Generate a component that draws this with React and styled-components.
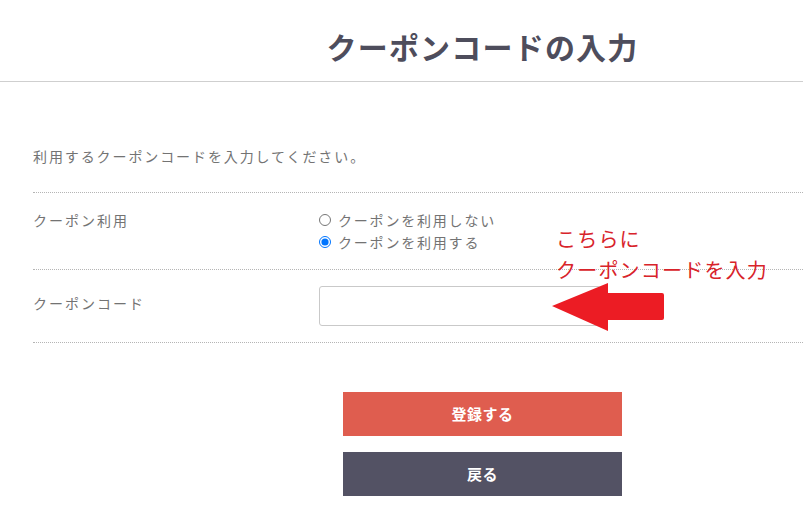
import React from "react";
import styled, { createGlobalStyle } from "styled-components";

const GlobalStyle = createGlobalStyle`
  html, body {
    margin: 0;
    padding: 0;
    background: #fff;
    overflow: hidden;
  }
  body {
    font-family: "Noto Sans CJK JP", "Noto Sans", sans-serif;
  }
`;

const Page = styled.div`
  width: 100%;
  overflow: hidden;
`;

const Frame = styled.div`
  width: 965px;
  position: relative;
`;

const Header = styled.header`
  height: 82px;
  padding-top: 10px;
  box-sizing: border-box;
  border-bottom: 1px solid #cfcfcf;
  display: flex;
  align-items: center;
  justify-content: center;
`;

const Title = styled.h1`
  margin: 0;
  font-size: 30px;
  font-weight: 700;
  line-height: 1;
  letter-spacing: 1.2px;
  color: #4e4d5c;
`;

const Content = styled.div`
  padding: 0 0 0 33px;
`;

const Intro = styled.p`
  margin: 63px 0 0;
  padding-bottom: 25px;
  font-size: 14px;
  line-height: 22px;
  letter-spacing: 1.9px;
  color: #737373;
  border-bottom: 1px dotted #b5b5b5;
`;

const Row = styled.div`
  display: grid;
  grid-template-columns: 286px 1fr;
  padding: 16px 0;
  border-bottom: 1px dotted #b5b5b5;
`;

const Label = styled.div`
  font-size: 14px;
  line-height: 22px;
  letter-spacing: 2px;
  color: #737373;
  padding-top: ${(p) => p.$offset || 0}px;
`;

const RadioList = styled.div`
  display: flex;
  flex-direction: column;
`;

const RadioOption = styled.label`
  display: flex;
  align-items: center;
  font-size: 14px;
  line-height: 22px;
  letter-spacing: 1.8px;
  color: #737373;
`;

const Radio = styled.input`
  width: 12px;
  height: 12px;
  margin: 0 7px 0 0;
`;

const CodeInput = styled.input`
  width: 282px;
  height: 40px;
  box-sizing: border-box;
  border: 1px solid #c9c9c9;
  border-radius: 3px;
  padding: 0 10px;
  font-size: 14px;
  font-family: inherit;
  outline: none;
`;

const Actions = styled.div`
  display: flex;
  flex-direction: column;
  align-items: center;
  gap: 16px;
  margin-top: 49px;
`;

const Button = styled.button`
  width: 279px;
  height: 44px;
  border: none;
  border-radius: 0;
  background: ${(p) => (p.$variant === "back" ? "#535264" : "#df5d4f")};
  color: #fff;
  font-family: inherit;
  font-size: 15px;
  font-weight: 700;
  letter-spacing: 0.5px;
  padding: 0 0 2px;
  cursor: pointer;
`;

const Note = styled.div`
  position: absolute;
  left: 556px;
  top: 223px;
  font-size: 20px;
  line-height: 31px;
  letter-spacing: 1.2px;
  color: #d8232a;
`;

const Arrow = styled.svg`
  position: absolute;
  left: 551px;
  top: 281px;
`;

export default function App() {
  return (
    <Page>
      <GlobalStyle />
      <Frame>
        <Header>
          <Title>クーポンコードの入力</Title>
        </Header>
        <Content>
          <Intro>利用するクーポンコードを入力してください。</Intro>
          <Row>
            <Label>クーポン利用</Label>
            <RadioList>
              <RadioOption>
                <Radio type="radio" name="coupon" />
                クーポンを利用しない
              </RadioOption>
              <RadioOption>
                <Radio type="radio" name="coupon" defaultChecked />
                クーポンを利用する
              </RadioOption>
            </RadioList>
          </Row>
          <Row>
            <Label $offset={6}>クーポンコード</Label>
            <div>
              <CodeInput type="text" />
            </div>
          </Row>
        </Content>
        <Actions>
          <Button>登録する</Button>
          <Button $variant="back">戻る</Button>
        </Actions>
        <Note>
          こちらに
          <br />
          クーポンコードを入力
        </Note>
        <Arrow width="116" height="52" viewBox="0 0 116 52">
          <path
            d="M1 25 L57 2 L57 12 L111 12 Q113 12 113 14 L113 37 Q113 39 111 39 L57 39 L57 50 Z"
            fill="#ec1c24"
          />
        </Arrow>
      </Frame>
    </Page>
  );
}
